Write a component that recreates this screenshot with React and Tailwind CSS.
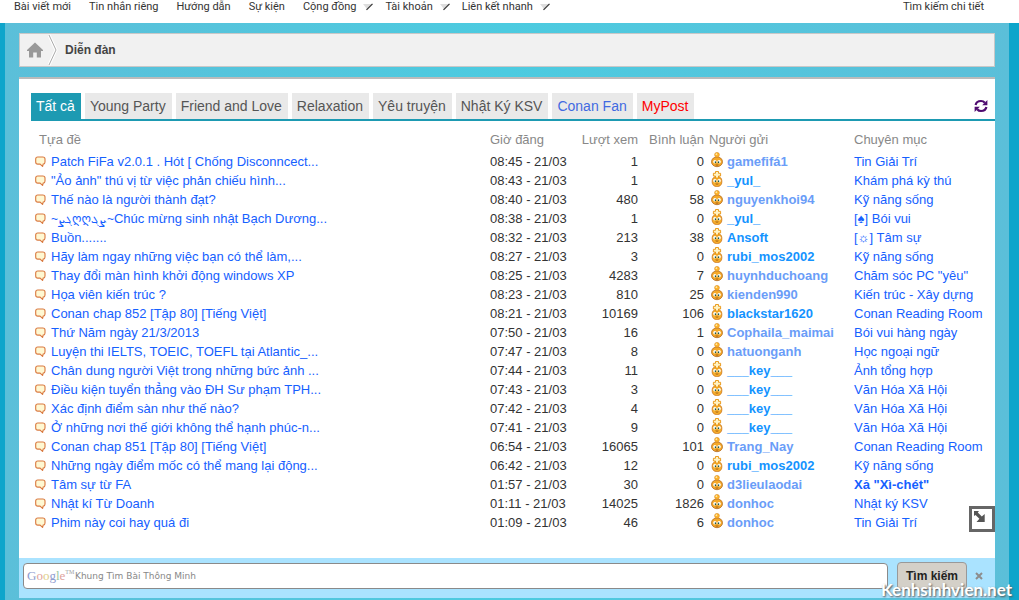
import { useState } from 'react';

const menuItems = [
  { label: 'Bài viết mới' },
  { label: 'Tin nhắn riêng' },
  { label: 'Hướng dẫn' },
  { label: 'Sự kiện' },
  { label: 'Cộng đồng', sub: true },
  { label: 'Tài khoản', sub: true },
  { label: 'Liên kết nhanh', sub: true },
];

const tabs = [
  { label: 'Tất cả', color: 'text-[#555]' },
  { label: 'Young Party', color: 'text-[#555]' },
  { label: 'Friend and Love', color: 'text-[#555]' },
  { label: 'Relaxation', color: 'text-[#555]' },
  { label: 'Yêu truyện', color: 'text-[#555]' },
  { label: 'Nhật Ký KSV', color: 'text-[#555]' },
  { label: 'Conan Fan', color: 'text-[#4169e1]' },
  { label: 'MyPost', color: 'text-[#ff0000]' },
];

const topics = [
  { title: 'Patch FiFa v2.0.1 . Hót [ Chống Disconncect...', time: '08:45 - 21/03', views: 1, replies: 0, user: 'gamefifá1', forum: 'Tin Giải Trí' },
  { title: '"Ảo ảnh" thú vị từ việc phản chiếu hình...', time: '08:43 - 21/03', views: 1, replies: 0, user: '_yul_', vip: true, forum: 'Khám phá kỳ thú' },
  { title: 'Thế nào là người thành đạt?', time: '08:40 - 21/03', views: 480, replies: 58, user: 'nguyenkhoi94', forum: 'Kỹ năng sống' },
  { deco: '~ܓܨღღܨܓ~', title: 'Chúc mừng sinh nhật Bạch Dương...', time: '08:38 - 21/03', views: 1, replies: 0, user: '_yul_', vip: true, forum: '[♠] Bói vui' },
  { title: 'Buồn.......', time: '08:32 - 21/03', views: 213, replies: 38, user: 'Ansoft', vip: true, forum: '[☼] Tâm sự' },
  { title: 'Hãy làm ngay những việc bạn có thể làm,...', time: '08:27 - 21/03', views: 3, replies: 0, user: 'rubi_mos2002', vip: true, forum: 'Kỹ năng sống' },
  { title: 'Thay đổi màn hình khởi động windows XP', time: '08:25 - 21/03', views: 4283, replies: 7, user: 'huynhduchoang', forum: 'Chăm sóc PC "yêu"' },
  { title: 'Họa viên kiến trúc ?', time: '08:23 - 21/03', views: 810, replies: 25, user: 'kienden990', forum: 'Kiến trúc - Xây dựng' },
  { title: 'Conan chap 852 [Tập 80] [Tiếng Việt]', time: '08:21 - 21/03', views: 10169, replies: 106, user: 'blackstar1620', vip: true, forum: 'Conan Reading Room' },
  { title: 'Thứ Năm ngày 21/3/2013', time: '07:50 - 21/03', views: 16, replies: 1, user: 'Cophaila_maimai', forum: 'Bói vui hàng ngày' },
  { title: 'Luyện thi IELTS, TOEIC, TOEFL tại Atlantic_...', time: '07:47 - 21/03', views: 8, replies: 0, user: 'hatuonganh', forum: 'Học ngoại ngữ' },
  { title: 'Chân dung người Việt trong những bức ảnh ...', time: '07:44 - 21/03', views: 11, replies: 0, user: '___key___', vip: true, forum: 'Ảnh tổng hợp' },
  { title: 'Điều kiện tuyển thẳng vào ĐH Sư phạm TPH...', time: '07:43 - 21/03', views: 3, replies: 0, user: '___key___', vip: true, forum: 'Văn Hóa Xã Hội' },
  { title: 'Xác định điểm sàn như thế nào?', time: '07:42 - 21/03', views: 4, replies: 0, user: '___key___', vip: true, forum: 'Văn Hóa Xã Hội' },
  { title: 'Ở những nơi thế giới không thể hạnh phúc-n...', time: '07:41 - 21/03', views: 9, replies: 0, user: '___key___', vip: true, forum: 'Văn Hóa Xã Hội' },
  { title: 'Conan chap 851 [Tập 80] [Tiếng Việt]', time: '06:54 - 21/03', views: 16065, replies: 101, user: 'Trang_Nay', forum: 'Conan Reading Room' },
  { title: 'Những ngày điểm mốc có thể mang lại động...', time: '06:42 - 21/03', views: 12, replies: 0, user: 'rubi_mos2002', vip: true, forum: 'Kỹ năng sống' },
  { title: 'Tâm sự từ FA', time: '01:57 - 21/03', views: 30, replies: 0, user: 'd3lieulaodai', forum: 'Xả "Xì-chét"', bold: true },
  { title: 'Nhật kí Từ Doanh', time: '01:11 - 21/03', views: 14025, replies: 1826, user: 'donhoc', forum: 'Nhật ký KSV' },
  { title: 'Phim này coi hay quá đi', time: '01:09 - 21/03', views: 46, replies: 6, user: 'donhoc', forum: 'Tin Giải Trí' },
];

function SubArrow() {
  return (
    <svg className="w-[10px] h-[8px]" viewBox="0 0 10 8" aria-hidden="true">
      <path d="M0 1H9L4 6Z" fill="#ddd" />
      <path d="M3.5 6.8L9.5 .8" stroke="#333" strokeWidth="1.2" />
    </svg>
  );
}

function HomeIcon() {
  return (
    <svg className="w-4 h-4" viewBox="0 0 16 16" aria-hidden="true">
      <path d="M8 .5L16 8V9H14V15.5H9.8V10.5H6.2V15.5H2V9H0V8Z" fill="#999" />
    </svg>
  );
}

function BubbleIcon() {
  return (
    <svg className="w-[11px] h-[11px] shrink-0" viewBox="0 0 11 11" aria-hidden="true">
      <path d="M2.8 1H7.8Q10 1 10 3V6Q10 8 8.2 8.1L7.6 10.4L5 8.1H2.8Q.7 8.1 .7 6V3Q.7 1 2.8 1Z" fill="#fff8d2" stroke="#d9793f" strokeWidth="1.1" />
    </svg>
  );
}

function RankIcon({ vip }) {
  return (
    <svg className="w-3 h-4 shrink-0 self-start" viewBox="0 0 12 16" aria-hidden="true">
      {vip ? (
        <>
          <rect x="1.2" y="5.5" width="9.6" height="10" rx="4.2" fill="#f7ae2c" stroke="#c9741a" strokeWidth=".8" />
          <path d="M4.5.5H7.5V2.3H9.6V5H7.5V7H4.5V5H2.4V2.3H4.5Z" fill="#fff3c4" stroke="#e8930f" strokeWidth=".9" />
        </>
      ) : (
        <>
          <ellipse cx="6" cy="9.8" rx="5.5" ry="4.9" fill="#f5a928" stroke="#b36a22" strokeWidth=".8" />
          <circle cx="6" cy="2.8" r="2.4" fill="#ffb52b" stroke="#d98a1c" strokeWidth=".6" />
          <circle cx="5.4" cy="2.2" r=".9" fill="#ffe9a6" />
        </>
      )}
      <ellipse cx="3.9" cy="9.8" rx="1.7" ry="1.7" fill="#fff" />
      <ellipse cx="8.1" cy="9.8" rx="1.7" ry="1.7" fill="#fff" />
      <rect x="3.8" y="9.4" width="1.3" height="1.7" fill="#1f5a46" />
      <rect x="6.9" y="9.4" width="1.3" height="1.7" fill="#1f5a46" />
      <path d="M4.6 12.8Q6 13.6 7.4 12.8" stroke="#8d4d12" strokeWidth=".8" fill="none" />
    </svg>
  );
}

function RefreshIcon() {
  return (
    <svg className="w-[14px] h-[14px]" viewBox="0 0 14 14" fill="none" aria-hidden="true">
      <path d="M1.6 6Q2.4 2 7 2Q9.4 2 10.8 3.8" stroke="#4f0c70" strokeWidth="2.2" />
      <path d="M13.4 1V6.2H8.2Z" fill="#4f0c70" />
      <path d="M12.4 8Q11.6 12 7 12Q4.6 12 3.2 10.2" stroke="#4f0c70" strokeWidth="2.2" />
      <path d="M.6 13V7.8H5.8Z" fill="#4f0c70" />
    </svg>
  );
}

function TopicTable() {
  return (
    <table className="w-full table-fixed text-[13px] leading-[19px] whitespace-nowrap">
      <colgroup>
        <col />
        <col className="w-[88px]" />
        <col className="w-[68px]" />
        <col className="w-[66px]" />
        <col className="w-[142px]" />
        <col className="w-[145px]" />
      </colgroup>
      <thead>
        <tr className="h-[31px] text-left text-[#888]">
          <th className="pl-2 pt-1.5 font-normal">Tựa đề</th>
          <th className="pl-1 pt-1.5 font-normal">Giờ đăng</th>
          <th className="pr-1 pt-1.5 font-normal text-right">Lượt xem</th>
          <th className="pr-1 pt-1.5 font-normal text-right">Bình luận</th>
          <th className="pl-px pt-1.5 font-normal">Người gửi</th>
          <th className="pl-1 pt-1.5 font-normal">Chuyên mục</th>
        </tr>
      </thead>
      <tbody className="text-[#333]">
        {topics.map((topic, index) => (
          <tr key={index} className="h-[19px]">
            <td className="pl-1">
              <div className="flex h-[19px] items-center gap-[5px]">
                <BubbleIcon />
                <a href="#" className="text-[#1560ff]">
                  {topic.deco && <span className="text-[12px]">{topic.deco}</span>}
                  {topic.title}
                </a>
              </div>
            </td>
            <td className="pl-1">{topic.time}</td>
            <td className="pr-1 text-right">{topic.views}</td>
            <td className="pr-1 text-right">{topic.replies}</td>
            <td className="pl-[3px]">
              <div className="flex h-[19px] items-center gap-1">
                <RankIcon vip={topic.vip} />
                <a href="#" className={`font-bold ${topic.vip ? 'text-[#1493ff]' : 'text-[#6a9df8]'}`}>{topic.user}</a>
              </div>
            </td>
            <td className="pl-1">
              <a href="#" className={`text-[#1560ff] ${topic.bold ? 'font-bold' : ''}`}>{topic.forum}</a>
            </td>
          </tr>
        ))}
      </tbody>
    </table>
  );
}

function SearchBar() {
  return (
    <form className="flex items-start bg-[#aae3ff] pt-1 pb-2 pl-1 pr-3" onSubmit={(e) => e.preventDefault()}>
      <label className="mt-px flex h-[26px] flex-1 items-center rounded-sm border border-[#8a8a8a] bg-white px-[3px]">
        <span className="flex w-12 items-start font-['Liberation_Serif',serif] text-[13px] leading-4 opacity-80" aria-label="Google">
          <span className="text-[#7283c4]">G</span>
          <span className="text-[#d88b85]">o</span>
          <span className="text-[#d6c26a]">o</span>
          <span className="text-[#7283c4]">g</span>
          <span className="text-[#7fb98b]">l</span>
          <span className="text-[#d88b85]">e</span>
          <span className="text-[6px] leading-[8px] text-[#888]">TM</span>
        </span>
        <input
          type="text"
          placeholder="Khung Tìm Bài Thông Minh"
          className="min-w-0 flex-1 bg-transparent pt-px font-['DejaVu_Sans',sans-serif] text-[9px] outline-none placeholder:text-[#888]"
        />
      </label>
      <button type="submit" className="ml-[9px] h-7 w-[70px] rounded-sm border border-[#999] bg-[#d4d0c8] text-[12px] font-bold text-[#222]">
        Tìm kiếm
      </button>
      <button type="button" aria-label="Đóng" className="ml-2 flex h-7 w-2 items-center justify-center">
        <svg className="h-2 w-2 shrink-0" viewBox="0 0 8 8" aria-hidden="true">
          <path d="M1 1L7 7M7 1L1 7" stroke="#8d8d8d" strokeWidth="2" />
        </svg>
      </button>
    </form>
  );
}

export default function App() {
  const [activeTab, setActiveTab] = useState('Tất cả');

  return (
    <div className="relative flex min-h-screen flex-col overflow-hidden bg-white font-['Liberation_Sans',Arial,'DejaVu_Sans',sans-serif]">
      {/* Menu */}
      <nav className="flex h-[23px] items-start justify-between pl-[14px] pr-[35px] font-['Roboto',sans-serif] text-[11px] leading-[14px] text-[#333]">
        <ul className="flex gap-3">
          {menuItems.map((item) => (
            <li key={item.label} className={item.sub ? '' : 'pr-1.5'}>
              <a href="#" className="flex items-center gap-[7px]">
                {item.label}
                {item.sub && <SubArrow />}
              </a>
            </li>
          ))}
        </ul>
        <a href="#">Tìm kiếm chi tiết</a>
      </nav>

      <div className="flex flex-1 flex-col bg-[#0ea5cb] pl-[5px] pr-[10px]">
        <main className="flex-1 bg-linear-to-r from-[#5bbfd9] via-[#4ccbe0] to-[#5bbfd9] px-[14px] pt-[10px]">
          {/* Breadcrumb */}
          <div className="flex h-[34px] items-center border border-[#c8c8c8] bg-[#f1f1f1] text-[12px] font-bold text-[#444]">
            <a href="#" aria-label="Trang chủ" className="pl-[7px]">
              <HomeIcon />
            </a>
            <svg className="ml-[5px] h-8 w-[10px]" viewBox="0 0 10 32" fill="none" aria-hidden="true">
              <path d="M1 1L8 16L1 31" stroke="#fff" strokeWidth="3" />
              <path d="M1 1L8 16L1 31" stroke="#aaa" />
            </svg>
            <a href="#" className="ml-[7px]">Diễn đàn</a>
          </div>

          {/* Danh sách bài viết */}
          <section className="relative mt-[10px] border-t-2 border-[#bbb] bg-white pl-3 pt-[14px] pb-[26px]">
            <div className="flex items-center justify-between border-b-2 border-[#1d9ab2] pr-[7px]">
              <div className="flex gap-1">
                {tabs.map((tab) => (
                  <button
                    key={tab.label}
                    type="button"
                    onClick={() => setActiveTab(tab.label)}
                    className={`h-[26px] pl-[5px] pr-1.5 text-[14px] ${activeTab === tab.label ? 'bg-[#1d9ab2] text-white' : `bg-[#e9e9e9] ${tab.color}`}`}
                  >
                    {tab.label}
                  </button>
                ))}
              </div>
              <button type="button" aria-label="Làm mới">
                <RefreshIcon />
              </button>
            </div>
            <TopicTable />
            <button type="button" aria-label="Mở rộng" className="absolute bottom-[26px] right-0 h-[26px] w-[26px] border-[3px] border-[#666] bg-white">
              <svg className="h-5 w-5" viewBox="0 0 20 20" aria-hidden="true">
                <path d="M2 2H7L5.8 3.6L9.8 7.4L12.7 5V13H4.5L7.4 9.8L3.5 6L2 7Z" fill="#555" />
              </svg>
            </button>
          </section>

          <SearchBar />
        </main>
      </div>

      <span className="absolute bottom-0.5 right-[7px] font-['Lato',sans-serif] text-[17px] leading-4 font-bold text-white text-shadow-[1px_1px_2px_#555]">
        Kenhsinhvien.net
      </span>
    </div>
  );
}
